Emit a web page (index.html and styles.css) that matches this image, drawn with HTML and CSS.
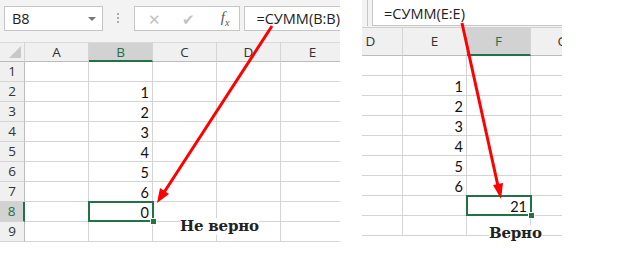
FILE: index.html
```html
<!DOCTYPE html>
<html lang="ru">
<head>
    <meta charset="UTF-8">
    <title>СУММ</title>
    <link rel="stylesheet" href="styles.css">
</head>
<body>
    <div class="page">
        <!-- Left shot: =СУММ(B:B) -->
        <div class="panel left">
            <div class="fbar">
                <div class="namebox">B8<span class="drop"></span></div>
                <div class="grip"></div>
                <div class="fxbox">
                    <span class="ic">&#x2715;</span>
                    <span class="ic">&#x2714;</span>
                    <span class="fx">f<sub>x</sub></span>
                </div>
                <div class="formula">=СУММ(B:B)</div>
            </div>
            <div class="sheet sheet-left">
                <div class="hd corner"><span class="tri"></span></div>
                <div class="hd">A</div>
                <div class="hd on">B</div>
                <div class="hd">C</div>
                <div class="hd">D</div>
                <div class="hd">E</div>

                <div class="rh">1</div><div class="c"></div><div class="c"></div><div class="c"></div><div class="c"></div><div class="c"></div>
                <div class="rh">2</div><div class="c"></div><div class="c">1</div><div class="c"></div><div class="c"></div><div class="c"></div>
                <div class="rh">3</div><div class="c"></div><div class="c">2</div><div class="c"></div><div class="c"></div><div class="c"></div>
                <div class="rh">4</div><div class="c"></div><div class="c">3</div><div class="c"></div><div class="c"></div><div class="c"></div>
                <div class="rh">5</div><div class="c"></div><div class="c">4</div><div class="c"></div><div class="c"></div><div class="c"></div>
                <div class="rh">6</div><div class="c"></div><div class="c">5</div><div class="c"></div><div class="c"></div><div class="c"></div>
                <div class="rh">7</div><div class="c"></div><div class="c">6</div><div class="c"></div><div class="c"></div><div class="c"></div>
                <div class="rh on">8</div><div class="c"></div><div class="c sel">0</div><div class="c"></div><div class="c"></div><div class="c"></div>
                <div class="rh">9</div><div class="c"></div><div class="c"></div><div class="c"></div><div class="c"></div><div class="c"></div>
            </div>
        </div>

        <!-- Right shot: =СУММ(E:E) -->
        <div class="panel right">
            <div class="fbar fbar-r">
                <div class="stub"></div>
                <div class="formula formula-r">=СУММ(E:E)</div>
            </div>
            <div class="sheet sheet-right">
                <div class="hd hd-r">D</div>
                <div class="hd hd-r">E</div>
                <div class="hd hd-r on">F</div>
                <div class="hd hd-r">G</div>

                <div class="c"></div><div class="c"></div><div class="c"></div><div class="c"></div>
                <div class="c"></div><div class="c">1</div><div class="c"></div><div class="c"></div>
                <div class="c"></div><div class="c">2</div><div class="c"></div><div class="c"></div>
                <div class="c"></div><div class="c">3</div><div class="c"></div><div class="c"></div>
                <div class="c"></div><div class="c">4</div><div class="c"></div><div class="c"></div>
                <div class="c"></div><div class="c">5</div><div class="c"></div><div class="c"></div>
                <div class="c"></div><div class="c">6</div><div class="c"></div><div class="c"></div>
                <div class="c"></div><div class="c"></div><div class="c sel">21</div><div class="c"></div>
                <div class="c"></div><div class="c"></div><div class="c"></div><div class="c"></div>
            </div>
        </div>
    </div>

    <p class="note note-bad">Не верно</p>
    <p class="note note-good">Верно</p>

    <svg class="arrows" width="617" height="258" viewBox="0 0 617 258">
        <line x1="272" y1="26" x2="163" y2="194" stroke="#ff0000" stroke-width="3"/>
        <polygon points="157,203 160,188 169,194" fill="#ff0000"/>
        <line x1="462" y1="23" x2="498" y2="186" stroke="#ff0000" stroke-width="3"/>
        <polygon points="501,199 493,185 503,183" fill="#ff0000"/>
    </svg>
</body>
</html>
```

FILE: styles.css
```css
body {
    margin: 0;
    background: #ffffff;
    font-family: "Open Sans", "Liberation Sans", sans-serif;
    color: #222;
}

.page {
    display: flex;
    align-items: flex-start;
    gap: 22px;
}

.panel {
    overflow: hidden;
    background: #f3f3f3;
}

.left {
    width: 340px;
}

.right {
    width: 200px;
}

/* formula bar */
.fbar {
    height: 42px;
    display: flex;
    align-items: flex-start;
    padding-top: 6px;
    box-sizing: border-box;
}

.namebox {
    width: 102px;
    height: 25px;
    margin-left: 4px;
    box-sizing: border-box;
    border: 1px solid #c6c6c6;
    background: #fff;
    font-size: 14.5px;
    line-height: 23px;
    padding-left: 7px;
    position: relative;
}

.drop {
    position: absolute;
    right: 6px;
    top: 10px;
    border-left: 4px solid transparent;
    border-right: 4px solid transparent;
    border-top: 4px solid #777;
}

.grip {
    width: 2px;
    height: 12px;
    margin: 7px 15px 0 14px;
    background: repeating-linear-gradient(#aaa 0 2px, transparent 2px 4px);
}

.fxbox {
    width: 110px;
    height: 25px;
    box-sizing: border-box;
    border: 1px solid #c6c6c6;
    background: #fff;
    display: flex;
    align-items: center;
    padding-left: 12px;
    gap: 18px;
}

.ic {
    color: #c2c2c2;
    font-size: 15px;
    width: 16px;
    text-align: center;
}

.fx {
    font-family: "Liberation Serif", serif;
    font-style: italic;
    font-size: 15px;
    color: #555;
    margin-left: 6px;
}

.fx sub {
    font-size: 10px;
}

.formula {
    flex: 1;
    height: 25px;
    margin-left: 4px;
    box-sizing: border-box;
    border: 1px solid #c6c6c6;
    border-right: none;
    background: #fff;
    font-size: 14.5px;
    line-height: 23px;
    padding-left: 11px;
    white-space: nowrap;
}

.fbar-r {
    height: 27px;
    padding-top: 0;
}

.stub {
    width: 6px;
    height: 26px;
    box-sizing: border-box;
    border-right: 1px solid #c6c6c6;
}

.formula-r {
    margin-left: 4px;
    height: 26px;
    border-top: none;
    line-height: 28px;
    padding-left: 11px;
}

/* grid */
.sheet {
    display: grid;
    grid-auto-rows: 20px;
    background: #fff;
    font-family: "Lato", "Liberation Sans", sans-serif;
    font-size: 14.5px;
}

.sheet-left {
    grid-template-columns: 25px repeat(5, 64px);
}

.sheet-right {
    grid-template-columns: repeat(4, 64px);
    grid-template-rows: 29px;
    margin-left: -23px;
}

.hd {
    background: #f0f0f0;
    border-right: 1px solid #d4d4d4;
    border-bottom: 1px solid #bcbcbc;
    border-top: 1px solid #dadada;
    box-sizing: border-box;
    text-align: center;
    font-family: "Open Sans", sans-serif;
    font-size: 13.5px;
    line-height: 18px;
    color: #333;
}

.hd-r {
    border-top: 1px solid #d0d0d0;
    line-height: 26px;
}

.hd.on {
    background: #d2d2d2;
    border-bottom: 2px solid #217346;
    color: #217346;
}

.corner {
    position: relative;
}

.tri {
    position: absolute;
    right: 3px;
    bottom: 3px;
    border-left: 12px solid transparent;
    border-bottom: 12px solid #c8c8c8;
}

.rh {
    background: #f0f0f0;
    border-right: 1px solid #bcbcbc;
    border-bottom: 1px solid #d4d4d4;
    box-sizing: border-box;
    text-align: center;
    font-family: "Open Sans", sans-serif;
    font-size: 13.5px;
    line-height: 19px;
    color: #333;
}

.rh.on {
    background: #d2d2d2;
    border-right: 2px solid #217346;
    color: #217346;
}

.c {
    border-right: 1px solid #d4d4d4;
    border-bottom: 1px solid #d4d4d4;
    box-sizing: border-box;
    text-align: right;
    padding-right: 3px;
    line-height: 21px;
    color: #111;
}

.sel {
    position: relative;
}

.sel::before {
    content: "";
    position: absolute;
    left: -1px;
    top: -1px;
    right: -2px;
    bottom: -1px;
    border: 2px solid #217346;
}

.sel::after {
    content: "";
    position: absolute;
    right: -5px;
    bottom: -4px;
    width: 5px;
    height: 5px;
    background: #217346;
    border: 1px solid #fff;
}

/* annotations */
.note {
    position: absolute;
    margin: 0;
    font-family: "DejaVu Serif", serif;
    font-weight: bold;
    font-size: 15px;
    letter-spacing: -0.2px;
    background: #fff;
    line-height: 17px;
}

.note-bad {
    left: 180px;
    top: 218px;
}

.note-good {
    left: 489px;
    top: 225px;
}

.arrows {
    position: absolute;
    left: 0;
    top: 0;
}
```
